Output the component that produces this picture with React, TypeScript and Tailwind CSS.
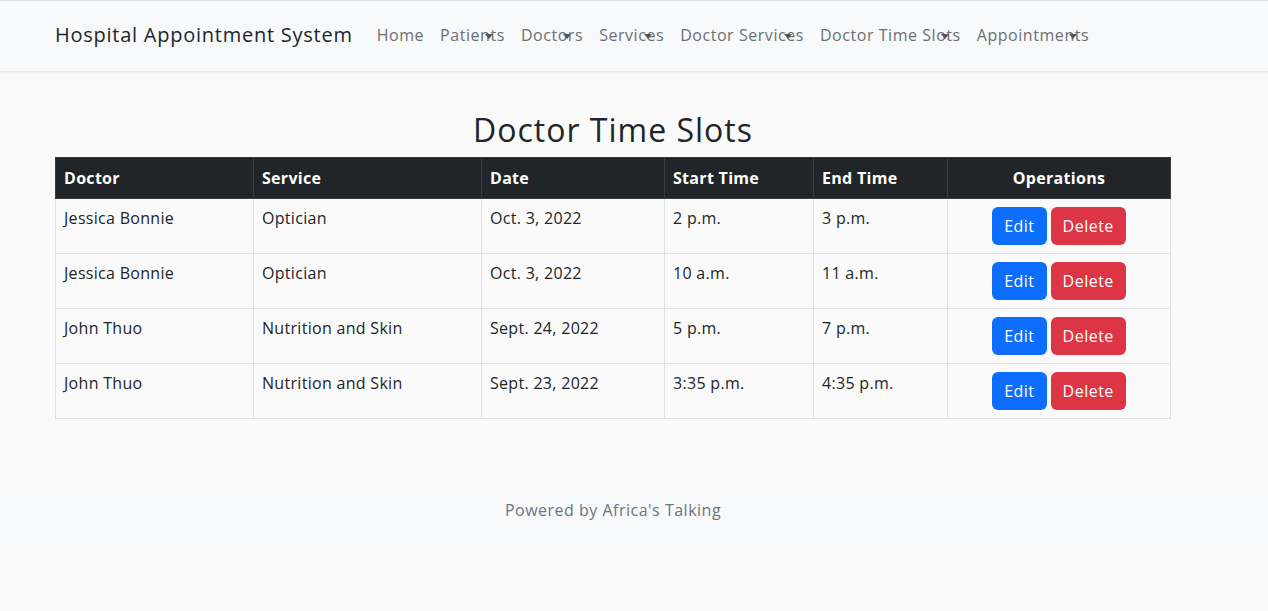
import React from 'react';

type Slot = { doctor: string; service: string; date: string; start: string; end: string };

const slots: Slot[] = [
  { doctor: 'Jessica Bonnie', service: 'Optician', date: 'Oct. 3, 2022', start: '2 p.m.', end: '3 p.m.' },
  { doctor: 'Jessica Bonnie', service: 'Optician', date: 'Oct. 3, 2022', start: '10 a.m.', end: '11 a.m.' },
  { doctor: 'John Thuo', service: 'Nutrition and Skin', date: 'Sept. 24, 2022', start: '5 p.m.', end: '7 p.m.' },
  { doctor: 'John Thuo', service: 'Nutrition and Skin', date: 'Sept. 23, 2022', start: '3:35 p.m.', end: '4:35 p.m.' },
];

const navItems = [
  { label: 'Home', caret: false },
  { label: 'Patients', caret: true },
  { label: 'Doctors', caret: true },
  { label: 'Services', caret: true },
  { label: 'Doctor Services', caret: true },
  { label: 'Doctor Time Slots', caret: true },
  { label: 'Appointments', caret: true },
];

export default function App() {
  return (
    <div className="min-h-[611px] bg-[#fafafa] text-[#212529] font-['Open_Sans',sans-serif]">
      <nav className="h-[72px] bg-[#f8f9fa] border-t border-[#dee2e6] border-b border-b-[#e5e7ea] shadow-[0_1px_2px_rgba(0,0,0,0.05)] flex items-center pl-[55px]">
        <span className="text-[20px] tracking-[0.75px] mr-[16px] -mt-[2px]">Hospital Appointment System</span>
        <ul className="flex items-center -mt-[2px]">
          {navItems.map(item => (
            <li key={item.label} className="relative px-[8px] text-[16px] tracking-[0.55px] text-[#6e6f71]">
              {item.label}
              {item.caret && (
                <span className="absolute right-[20px] top-[11px] w-0 h-0 border-l-[4px] border-r-[4px] border-t-[5px] border-l-transparent border-r-transparent border-t-[#555]" />
              )}
            </li>
          ))}
        </ul>
      </nav>

      <main className="ml-[55px] w-[1116px] pt-[39px]">
        <h2 className="text-[32px] leading-[38px] font-medium tracking-[1px] text-center mb-[8px]">Doctor Time Slots</h2>
        <table className="w-full border-collapse text-[16px] tracking-[0.3px]">
          <thead>
            <tr className="bg-[#212529] text-white">
              <th className="w-[198px] text-left font-bold px-[8px] py-[8px] leading-[24px] border border-[#373b3e]">Doctor</th>
              <th className="w-[228px] text-left font-bold px-[8px] py-[8px] leading-[24px] border border-[#373b3e]">Service</th>
              <th className="w-[183px] text-left font-bold px-[8px] py-[8px] leading-[24px] border border-[#373b3e]">Date</th>
              <th className="w-[149px] text-left font-bold px-[8px] py-[8px] leading-[24px] border border-[#373b3e]">Start Time</th>
              <th className="w-[134px] text-left font-bold px-[8px] py-[8px] leading-[24px] border border-[#373b3e]">End Time</th>
              <th className="text-center font-bold px-[8px] py-[8px] leading-[24px] border border-[#373b3e]">Operations</th>
            </tr>
          </thead>
          <tbody>
            {slots.map((s, i) => (
              <tr key={i} className="align-top">
                <td className="px-[8px] pt-[7px] pb-[9px] leading-[24px] border border-[#dee2e6]">{s.doctor}</td>
                <td className="px-[8px] pt-[7px] pb-[9px] leading-[24px] border border-[#dee2e6]">{s.service}</td>
                <td className="px-[8px] pt-[7px] pb-[9px] leading-[24px] border border-[#dee2e6]">{s.date}</td>
                <td className="px-[8px] pt-[7px] pb-[9px] leading-[24px] border border-[#dee2e6]">{s.start}</td>
                <td className="px-[8px] pt-[7px] pb-[9px] leading-[24px] border border-[#dee2e6]">{s.end}</td>
                <td className="px-[8px] py-[8px] border border-[#dee2e6]">
                  <div className="flex justify-center gap-[4px]">
                    <button className="h-[38px] px-[12px] rounded-[6px] bg-[#0d6efd] text-white leading-[24px] tracking-[0.5px]">Edit</button>
                    <button className="h-[38px] px-[12px] rounded-[6px] bg-[#dc3545] text-white leading-[24px] tracking-[0.5px]">Delete</button>
                  </div>
                </td>
              </tr>
            ))}
          </tbody>
        </table>
      </main>

      <footer className="mt-[66px] bg-[#f8f9fa] pt-[13px] pb-[19px]">
        <div className="ml-[55px] w-[1116px] text-center text-[16px] leading-[24px] tracking-[0.5px] text-[#6c757d]">
          Powered by Africa's Talking
        </div>
      </footer>
    </div>
  );
}
